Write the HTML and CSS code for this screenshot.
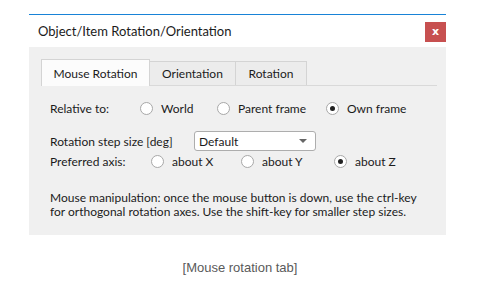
FILE: index.html
```html
<!DOCTYPE html>
<html lang="en">
<head>
  <meta charset="UTF-8">
  <title>Object/Item Rotation/Orientation</title>
  <link rel="stylesheet" href="styles.css">
</head>
<body>
  <div class="window">
    <div class="titlebar">
      <span class="title">Object/Item Rotation/Orientation</span>
      <span class="close">x</span>
    </div>
    <div class="panel">
      <div class="tabs">
        <div class="tab active">Mouse Rotation</div>
        <div class="tab t2">Orientation</div>
        <div class="tab t3">Rotation</div>
      </div>

      <div class="row rel">
        <span class="label">Relative to:</span>
        <span class="opt w1"><i class="radio"></i>World</span>
        <span class="opt w2"><i class="radio"></i>Parent frame</span>
        <span class="opt"><i class="radio on"></i>Own frame</span>
      </div>

      <div class="row step">
        <span class="label">Rotation step size [deg]</span>
        <div class="select">Default<span class="arrow"></span></div>
      </div>

      <div class="row axis">
        <span class="label">Preferred axis:</span>
        <span class="opt a1"><i class="radio"></i>about X</span>
        <span class="opt a2"><i class="radio"></i>about Y</span>
        <span class="opt"><i class="radio on"></i>about Z</span>
      </div>

      <p class="note">Mouse manipulation: once the mouse button is down, use the ctrl-key<br>
        for orthogonal rotation axes. Use the shift-key for smaller step sizes.</p>
    </div>
  </div>
  <p class="caption">[Mouse rotation tab]</p>
</body>
</html>
```

FILE: styles.css
```css
body { margin: 0; background: #fff; font-family: Lato, "Open Sans", sans-serif; font-size: 12px; color: #1b1b1b; }
.window { width: 417px; margin: 14px 0 0 29px; border-top: 1px solid #1883d7; }
.titlebar { height: 32px; display: flex; align-items: center; justify-content: space-between; padding-left: 9px; }
.title { font-size: 13px; color: #1b1b1b; }
.close { width: 21px; height: 20px; margin-top: 1px; background: #c75050; color: #fff; font-size: 11px; font-weight: bold; display: flex; align-items: center; justify-content: center; font-family: "DejaVu Sans", sans-serif; }
.panel { height: 188px; background: #f0f0f0; padding: 12px 9px 0 12px; box-sizing: border-box; }
.tabs { display: flex; align-items: flex-end; border-bottom: 1px solid #d9d9d9; height: 26px; }
.tab { height: 24px; display: flex; align-items: center; justify-content: center; white-space: nowrap; background: #ececec; border: 1px solid #d4d4d4; border-bottom: none; margin-left: -1px; box-sizing: border-box; }
.tab.active { height: 27px; margin-bottom: -1px; background: #fcfcfc; margin-left: 0; width: 109px; }
.t2 { width: 87px; }
.t3 { width: 72px; }
.row { display: flex; align-items: center; padding-left: 9px; white-space: nowrap; }
.label { display: inline-block; }
.opt { display: inline-flex; align-items: center; }
.radio { width: 13px; height: 13px; border: 1px solid #a8a8a8; border-radius: 50%; background: #fff; box-sizing: border-box; margin-right: 8px; position: relative; }
.radio.on::after { content: ""; position: absolute; left: 3px; top: 3px; width: 5px; height: 5px; border-radius: 50%; background: #222; }
.rel { margin-top: 15px; }
.rel .label { width: 90px; }
.w1 { width: 77px; }
.w2 { width: 109px; }
.step { margin-top: 15px; }
.step .label { width: 144px; }
.select { width: 122px; height: 20px; box-sizing: border-box; background: #fff; border: 1px solid #adadad; border-radius: 3px; padding-left: 4px; display: flex; align-items: center; position: relative; }
.arrow { position: absolute; right: 8px; top: 7px; border-left: 4px solid transparent; border-right: 4px solid transparent; border-top: 4px solid #666; }
.axis { margin-top: 3px; }
.axis .label { width: 101px; }
.a1 { width: 90px; }
.a2 { width: 93px; }
.note { margin: 22px 0 0 9px; line-height: 14px; white-space: nowrap; }
.caption { margin: 25px 0 0; text-align: center; width: 480px; font-family: "Liberation Sans", Arial, sans-serif; font-size: 13px; color: #5a5a5a; }
```
